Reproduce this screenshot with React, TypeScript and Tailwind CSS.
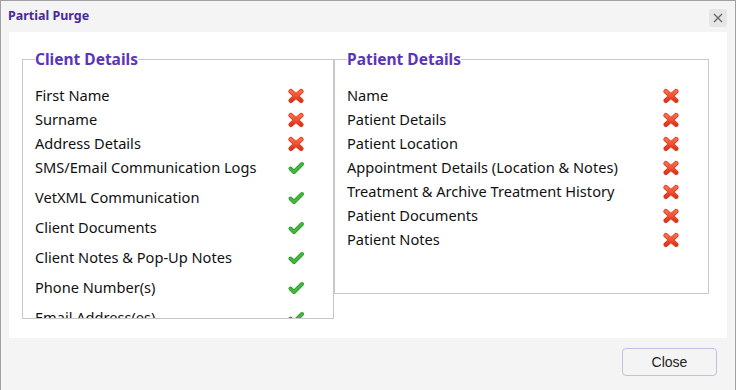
import React from "react"

type Row = { label: string; ok: boolean; h?: string }

const clientRows: Row[] = [
  { label: "First Name", ok: false },
  { label: "Surname", ok: false },
  { label: "Address Details", ok: false },
  { label: "SMS/Email Communication Logs", ok: true, h: "h-[27px] pb-[3px]" },
  { label: "VetXML Communication", ok: true, h: "h-[30px]" },
  { label: "Client Documents", ok: true, h: "h-[30px]" },
  { label: "Client Notes & Pop-Up Notes", ok: true, h: "h-[30px]" },
  { label: "Phone Number(s)", ok: true, h: "h-[30px]" },
  { label: "Email Address(es)", ok: true, h: "h-[30px]" },
]

const patientRows: Row[] = [
  { label: "Name", ok: false },
  { label: "Patient Details", ok: false },
  { label: "Patient Location", ok: false },
  { label: "Appointment Details (Location & Notes)", ok: false },
  { label: "Treatment & Archive Treatment History", ok: false },
  { label: "Patient Documents", ok: false },
  { label: "Patient Notes", ok: false },
]

function Cross() {
  return (
    <svg width="18" height="16" viewBox="0 0 18 16">
      <defs>
        <linearGradient id="xg" x1="0" y1="0" x2="0" y2="1">
          <stop offset="0" stopColor="#ff6a45" />
          <stop offset="1" stopColor="#e0361c" />
        </linearGradient>
      </defs>
      <path d="M4 3.5 L14 12.5 M14 3.5 L4 12.5" stroke="#d4381f" strokeWidth="5" strokeLinecap="round" fill="none" />
      <path d="M4 3.5 L14 12.5 M14 3.5 L4 12.5" stroke="url(#xg)" strokeWidth="3.6" strokeLinecap="round" fill="none" />
    </svg>
  )
}

function Check() {
  return (
    <svg width="18" height="16" viewBox="0 0 18 16">
      <path d="M3.5 8.5 L7 12 L15 4" stroke="#2f9e2c" strokeWidth="4" strokeLinecap="round" strokeLinejoin="round" fill="none" />
      <path d="M3.5 8.5 L7 12 L15 4" stroke="#46b842" strokeWidth="2.4" strokeLinecap="round" strokeLinejoin="round" fill="none" />
    </svg>
  )
}

function Section({ title, rows, className }: { title: string; rows: Row[]; className: string }) {
  return (
    <fieldset className={`border border-[#c8c8c8] overflow-hidden ${className}`}>
      <legend className="ml-[12px] text-[15.5px] leading-[20px] font-bold text-[#5b35b8]">{title}</legend>
      <div className="pt-[15px] pl-[12px] pr-[28px]">
        {rows.map((r) => (
          <div key={r.label} className={`flex items-center justify-between ${r.h ?? "h-6"}`}>
            <span className="text-[14.6px] text-[#111] whitespace-nowrap">{r.label}</span>
            {r.ok ? <Check /> : <Cross />}
          </div>
        ))}
      </div>
    </fieldset>
  )
}

export default function App() {
  return (
    <div className="w-[737px] h-[390px] bg-white" style={{ fontFamily: '"Noto Sans", sans-serif' }}>
      <div className="w-[736px] h-[390px] bg-[#f4f4f4] border-l border-t border-r border-[#a0a0a0] flex flex-col">
        {/* Title bar */}
        <div className="h-[31px] flex items-center justify-between pl-[7px] pr-[8px]">
          <span className="text-[12.5px] font-bold text-[#4a2a96]">Partial Purge</span>
          <button className="w-[18px] h-[18px] mt-[2px] rounded-[3px] bg-[#e6e6e6] flex items-center justify-center">
            <svg width="10" height="10" viewBox="0 0 10 10">
              <path d="M1 1 L9 9 M9 1 L1 9" stroke="#666" strokeWidth="1.3" />
            </svg>
          </button>
        </div>

        {/* Body */}
        <div className="ml-[8px] w-[718px] h-[306px] bg-white flex items-start pt-[17px] pl-[13px]">
          <Section title="Client Details" rows={clientRows} className="w-[312px] h-[270px]" />
          <Section title="Patient Details" rows={patientRows} className="w-[375px] h-[245px]" />
        </div>

        {/* Footer */}
        <div className="flex justify-end pr-[18px] pt-[10px]">
          <button
            className="w-[95px] h-[28px] rounded-[4px] border border-[#c6bfe3] bg-[#f4f4f4] text-[14px] text-[#222]"
            style={{ fontFamily: '"Liberation Sans", Arial, sans-serif' }}
          >
            Close
          </button>
        </div>
      </div>
    </div>
  )
}
